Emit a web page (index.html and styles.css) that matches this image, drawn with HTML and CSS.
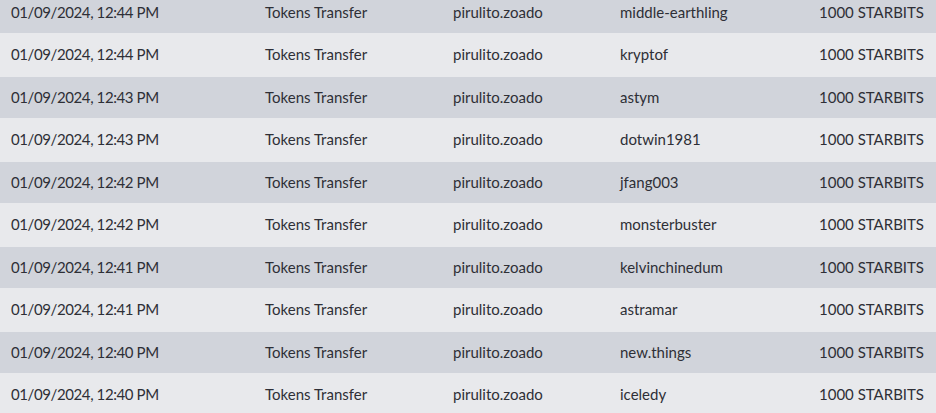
FILE: index.html
```html
<!DOCTYPE html>
<html>
<head>
<meta charset="utf-8">
<link rel="stylesheet" href="styles.css">
</head>
<body>
<div class="scroller">
<table class="tx">
<colgroup>
<col class="c-date"><col class="c-type"><col class="c-from"><col class="c-to"><col class="c-amt">
</colgroup>
<tbody>
<tr><td class="date">01/09/2024, 12:44 PM</td><td>Tokens Transfer</td><td>pirulito.zoado</td><td>middle-earthling</td><td class="amt">1000 STARBITS</td></tr>
<tr><td class="date">01/09/2024, 12:44 PM</td><td>Tokens Transfer</td><td>pirulito.zoado</td><td>kryptof</td><td class="amt">1000 STARBITS</td></tr>
<tr><td class="date">01/09/2024, 12:43 PM</td><td>Tokens Transfer</td><td>pirulito.zoado</td><td>astym</td><td class="amt">1000 STARBITS</td></tr>
<tr><td class="date">01/09/2024, 12:43 PM</td><td>Tokens Transfer</td><td>pirulito.zoado</td><td>dotwin1981</td><td class="amt">1000 STARBITS</td></tr>
<tr><td class="date">01/09/2024, 12:42 PM</td><td>Tokens Transfer</td><td>pirulito.zoado</td><td>jfang003</td><td class="amt">1000 STARBITS</td></tr>
<tr><td class="date">01/09/2024, 12:42 PM</td><td>Tokens Transfer</td><td>pirulito.zoado</td><td>monsterbuster</td><td class="amt">1000 STARBITS</td></tr>
<tr><td class="date">01/09/2024, 12:41 PM</td><td>Tokens Transfer</td><td>pirulito.zoado</td><td>kelvinchinedum</td><td class="amt">1000 STARBITS</td></tr>
<tr><td class="date">01/09/2024, 12:41 PM</td><td>Tokens Transfer</td><td>pirulito.zoado</td><td>astramar</td><td class="amt">1000 STARBITS</td></tr>
<tr><td class="date">01/09/2024, 12:40 PM</td><td>Tokens Transfer</td><td>pirulito.zoado</td><td>new.things</td><td class="amt">1000 STARBITS</td></tr>
<tr><td class="date">01/09/2024, 12:40 PM</td><td>Tokens Transfer</td><td>pirulito.zoado</td><td>iceledy</td><td class="amt">1000 STARBITS</td></tr>
</tbody>
</table>
</div>
</body>
</html>
```
FILE: styles.css
```css
html, body {
  margin: 0;
  padding: 0;
  background: #e8e9ec;
  overflow: hidden;
}
.scroller {
  margin-top: -8px;
}
.tx {
  width: 936px;
  border-collapse: collapse;
  table-layout: fixed;
  font-family: Lato, "Noto Sans", sans-serif;
  font-size: 15px;
  color: #2e2f36;
}
.c-date { width: 254px; }
.c-type { width: 188px; }
.c-from { width: 167px; }
.c-to { width: 170px; }
.c-amt { width: auto; }
.tx td {
  padding: 0 0 2px 11px;
  white-space: nowrap;
  vertical-align: middle;
}
.tx td.date {
  letter-spacing: -0.4px;
}
.tx td.amt {
  text-align: right;
  padding: 0 12px 2px 0;
}
.tx tr:nth-child(odd) {
  background: #d1d4db;
  height: 41px;
}
.tx tr:nth-child(even) {
  background: #e8e9ec;
  height: 44px;
}
```
